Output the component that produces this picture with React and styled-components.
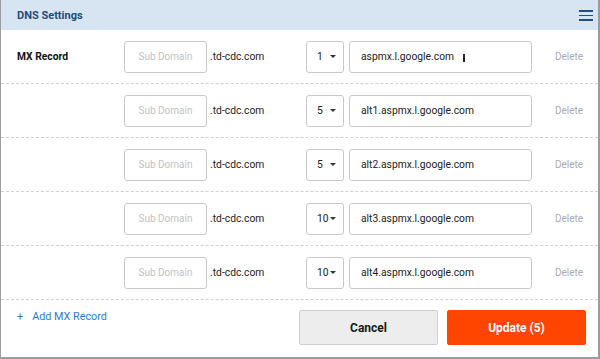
import React from "react";
import styled, { createGlobalStyle } from "styled-components";

const Global = createGlobalStyle`
  html, body { margin: 0; padding: 0; background: #fff; }
  body { font-family: Roboto, "Liberation Sans", Arial, sans-serif; }
  * { box-sizing: border-box; }
`;

const Frame = styled.div`
  width: 600px;
  height: 359px;
  border-left: 1px solid #9a9d9f;
  border-right: 2px solid #9a9d9f;
  border-bottom: 2px solid #9a9d9f;
  display: flex;
  flex-direction: column;
  background: #fff;
  overflow: hidden;
`;

const Header = styled.div`
  height: 30px;
  background: #d7e4f2;
  display: flex;
  align-items: center;
  justify-content: space-between;
  padding: 0 5px 0 16px;
`;

const Title = styled.div`
  font-size: 11px;
  font-weight: 700;
  color: #1f4c7c;
`;

const Menu = styled.div`
  width: 14px;
  display: flex;
  flex-direction: column;
  gap: 3px;
  margin-top: 1px;
  span {
    display: block;
    height: 1.6px;
    background: #234f80;
  }
`;

const Row = styled.div`
  height: 54px;
  border-bottom: 1px dashed #d2d2d2;
  display: flex;
  align-items: center;
  padding-left: 16px;
`;

const Label = styled.div`
  width: 107px;
  font-size: 10.3px;
  font-weight: 700;
  color: #111;
`;

const Box = styled.div`
  height: 32px;
  border: 1px solid #c9c9c9;
  border-radius: 3px;
  background: #fff;
  display: flex;
  align-items: center;
  font-size: 10.3px;
  position: relative;
`;

const SubInput = styled(Box)`
  width: 83px;
  justify-content: center;
  color: #c2c2c2;
  font-size: 10px;
`;

const Domain = styled.div`
  width: 99px;
  padding-left: 3px;
  font-size: 10.3px;
  color: #222;
`;

const Select = styled(Box)`
  width: 38px;
  padding: 0 7px 0 10px;
  color: #222;
  justify-content: space-between;
`;

const Caret = styled.span`
  width: 0;
  height: 0;
  border-left: 3px solid transparent;
  border-right: 3px solid transparent;
  border-top: 3.5px solid #333;
`;

const Host = styled(Box)`
  width: 183px;
  margin-left: 5px;
  padding-left: 11px;
  color: #222;
`;

const Cursor = styled.span`
  position: absolute;
  left: 113px;
  top: 12px;
  width: 1.5px;
  height: 8px;
  background: #222;
`;

const Delete = styled.div`
  margin-left: 23px;
  font-size: 10px;
  color: #ababab;
`;

const Footer = styled.div`
  flex: 1;
  display: flex;
  align-items: flex-start;
  padding: 10px 0 0 16px;
`;

const AddLink = styled.div`
  width: 282px;
  font-size: 10.8px;
  color: #2a7bd4;
  span { margin-right: 9px; }
`;

const Button = styled.button`
  width: 139px;
  height: 35px;
  border-radius: 2px;
  font-family: Roboto, "Liberation Sans", Arial, sans-serif;
  font-size: 12px;
  font-weight: 700;
  cursor: pointer;
  border: 1px solid ${(p) => (p.$primary ? "#ff4500" : "#cfcfcf")};
  background: ${(p) => (p.$primary ? "#ff4500" : "#eeedee")};
  color: ${(p) => (p.$primary ? "#fff" : "#1a1a1a")};
  margin-left: ${(p) => (p.$primary ? "9px" : "0")};
`;

const records = [
  { pri: "1", host: "aspmx.l.google.com", label: "MX Record", cursor: true },
  { pri: "5", host: "alt1.aspmx.l.google.com" },
  { pri: "5", host: "alt2.aspmx.l.google.com" },
  { pri: "10", host: "alt3.aspmx.l.google.com" },
  { pri: "10", host: "alt4.aspmx.l.google.com" },
];

export default function App() {
  return (
    <>
      <Global />
      <Frame>
        <Header>
          <Title>DNS Settings</Title>
          <Menu>
            <span />
            <span />
            <span />
          </Menu>
        </Header>
        {records.map((r, i) => (
          <Row key={i}>
            <Label>{r.label || ""}</Label>
            <SubInput>Sub Domain</SubInput>
            <Domain>.td-cdc.com</Domain>
            <Select>
              <span>{r.pri}</span>
              <Caret />
            </Select>
            <Host>
              {r.host}
              {r.cursor && <Cursor />}
            </Host>
            <Delete>Delete</Delete>
          </Row>
        ))}
        <Footer>
          <AddLink>
            <span>+</span>Add MX Record
          </AddLink>
          <Button>Cancel</Button>
          <Button $primary>Update (5)</Button>
        </Footer>
      </Frame>
    </>
  );
}
